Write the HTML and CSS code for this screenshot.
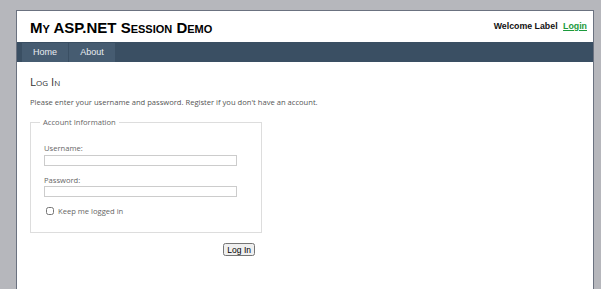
FILE: index.html
```html
<!DOCTYPE html>
<html lang="en">
<head>
  <meta charset="UTF-8" />
  <title>My ASP.NET Session Demo</title>
  <link rel="stylesheet" href="styles.css">
</head>
<body>
  <div class="page">
    <!-- header -->
    <div class="header">
      <h1 class="title">My ASP.NET Session Demo</h1>
      <div class="login-display">
        <span class="welcome">Welcome Label</span>
        <a href="#" class="login-link">Login</a>
      </div>
    </div>

    <!-- menu -->
    <div class="menu-bar">
      <ul class="menu">
        <li><a href="#">Home</a></li>
        <li><a href="#">About</a></li>
      </ul>
    </div>

    <!-- main -->
    <div class="main">
      <h2>Log In</h2>
      <p class="intro">Please enter your username and password. Register if you don't have an account.</p>

      <fieldset class="login">
        <legend>Account Information</legend>
        <div class="field">
          <label for="user">Username:</label>
          <input type="text" id="user" class="textbox">
        </div>
        <div class="field">
          <label for="pass">Password:</label>
          <input type="password" id="pass" class="textbox">
        </div>
        <div class="remember">
          <input type="checkbox" id="keep">
          <label for="keep">Keep me logged in</label>
        </div>
      </fieldset>

      <div class="submit">
        <button type="button">Log In</button>
      </div>
    </div>
  </div>
</body>
</html>
```

FILE: styles.css
```css
/* page background */
body {
  margin: 0;
  padding: 10px 0 0 16px;
  background-color: #b6b7bc;
  font-family: "Open Sans", "DejaVu Sans", Arial, sans-serif;
  font-size: 7.6px;
  color: #666;
  overflow: hidden;
  height: 279px;
}

.page {
  width: 576px;
  height: 279px;
  background-color: #fff;
  border: 1px solid #6b7280;
  border-bottom: none;
}

/* header */
.header {
  display: flex;
  justify-content: space-between;
  align-items: flex-start;
  height: 31px;
}

.title {
  margin: 0;
  padding: 9px 0 0 13px;
  font-family: "Liberation Sans", Arial, sans-serif;
  font-size: 15px;
  line-height: 16px;
  font-weight: bold;
  font-variant: small-caps;
  color: #000;
}

.login-display {
  padding: 10px 6px 0 0;
  font-family: "Liberation Sans", Arial, sans-serif;
  font-size: 8.8px;
  font-weight: bold;
  color: #111;
}
.login-link {
  margin-left: 3px;
  color: #1c9a3c;
}

/* menu */
.menu-bar {
  height: 20px;
  background-color: #3a4f63;
  padding-left: 5px;
}
.menu {
  list-style: none;
  margin: 0;
  padding: 1px 0 0;
  display: flex;
  gap: 1px;
}
.menu a {
  display: block;
  width: 46px;
  height: 19px;
  line-height: 19px;
  text-align: center;
  background-color: #465c71;
  color: #e8edf2;
  text-decoration: none;
  font-family: "Liberation Sans", Arial, sans-serif;
  font-size: 9px;
}

/* main */
.main {
  padding: 12px 13px;
}

.main h2 {
  margin: 0;
  font-size: 11.5px;
  font-weight: normal;
  font-variant: small-caps;
  color: #333;
}

.intro {
  margin: 8px 0 10px;
  color: #555;
}

.login {
  width: 217px;
  margin: 0;
  padding: 6px 0 16px 13px;
  border: 1px solid #ddd;
}
.login legend {
  margin-left: -4px;
  padding: 0 3px;
}

.field label {
  display: block;
  margin: 10px 0 2px;
}
.field + .field label {
  margin: 9px 0 1px;
}
.textbox {
  display: block;
  box-sizing: border-box;
  width: 193px;
  height: 11px;
  margin: 0;
  padding: 0 1px;
  border: 1px solid #ccc;
}

.remember {
  display: flex;
  align-items: center;
  gap: 4px;
  margin: 9px 0 0 2px;
}
.remember input {
  width: 8px;
  height: 8px;
  margin: 0;
}

.submit {
  width: 225px;
  text-align: right;
  padding-top: 10px;
}
.submit button {
  height: 13px;
  font-family: "Liberation Sans", Arial, sans-serif;
  font-size: 8.5px;
  line-height: 10px;
  padding: 0 2px;
  color: #000;
}
```
